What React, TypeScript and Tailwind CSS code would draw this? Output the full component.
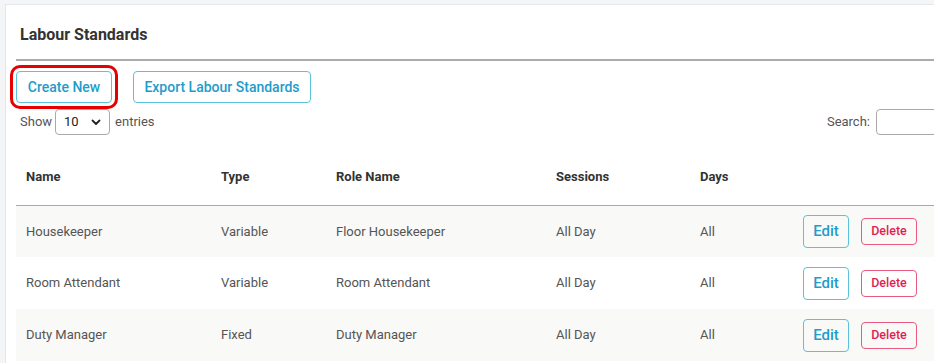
import React from "react";

type Row = {
  name: string;
  type: string;
  role: string;
  sessions: string;
  days: string;
};

const rows: Row[] = [
  { name: "Housekeeper", type: "Variable", role: "Floor Housekeeper", sessions: "All Day", days: "All" },
  { name: "Room Attendant", type: "Variable", role: "Room Attendant", sessions: "All Day", days: "All" },
  { name: "Duty Manager", type: "Fixed", role: "Duty Manager", sessions: "All Day", days: "All" }
];

export default function App() {
  return (
    <div
      className="w-[934px] h-[363px] overflow-hidden bg-[#f3f5f7] pt-[4px] pl-[5px]"
      style={{ fontFamily: "Roboto, 'Liberation Sans', sans-serif" }}>
      <div className="w-[1000px] h-[400px] bg-white border-l border-t border-[#e4e8ec] px-[10px]">
        <h1 className="pt-[18px] pl-[4px] text-[16px] leading-6 font-bold text-[#333]">
          Labour Standards
        </h1>
        <div className="mt-[12px] h-[2px] bg-[#ababab]" />

        <div className="flex items-center gap-[21px] mt-[10px]">
          <button className="h-[32px] w-[96px] rounded-[4px] border border-[#5bc2de] text-[14px] font-medium text-[#1f9ccb] outline-[3px] outline-solid outline-[#e60000] outline-offset-[3px]">
            Create New
          </button>
          <button className="h-[32px] w-[178px] rounded-[4px] border border-[#5bc2de] text-[14px] font-medium text-[#1f9ccb]">
            Export Labour Standards
          </button>
        </div>

        <div className="flex items-center mt-[6px] pl-[4px] w-[960px] text-[13px] text-[#555]">
          <span>Show</span>
          <div className="ml-[3px] mr-[5px] h-[26px] w-[55px] rounded-[4px] border border-[#aaa] flex items-center justify-between px-[8px] text-[13px] text-[#222]">
            <span>10</span>
            <svg width="10" height="7" viewBox="0 0 10 7" fill="none">
              <path d="M1.5 1.5 L5 5 L8.5 1.5" stroke="#222" strokeWidth="1.8" strokeLinecap="round" strokeLinejoin="round" />
            </svg>
          </div>
          <span>entries</span>
          <span className="ml-auto mr-[6px]">Search:</span>
          <div className="h-[26px] w-[100px] rounded-[4px] border border-[#aaa]" />
        </div>

        <table className="mt-[13px] w-[980px] table-fixed border-collapse text-[13px]">
          <thead>
            <tr className="border-b border-[#a9a9a9] text-[#333] font-bold">
              <th className="h-[57px] w-[205px] pl-[10px] text-left">Name</th>
              <th className="w-[115px] text-left">Type</th>
              <th className="w-[220px] text-left">Role Name</th>
              <th className="w-[144px] text-left">Sessions</th>
              <th className="w-[103px] text-left">Days</th>
              <th className="w-[193px]" />
            </tr>
          </thead>
          <tbody className="text-[#555]">
            {rows.map((row, i) => (
              <tr key={row.name} className={i % 2 === 0 ? "bg-[#f9f9f8]" : "bg-white"}>
                <td className="h-[52px] pl-[10px]">{row.name}</td>
                <td>{row.type}</td>
                <td>{row.role}</td>
                <td>{row.sessions}</td>
                <td>{row.days}</td>
                <td>
                  <div className="flex items-center gap-[12px]">
                    <button className="h-[33px] w-[46px] rounded-[4px] border border-[#5bc2de] text-[15px] font-medium text-[#1f9ccb]">
                      Edit
                    </button>
                    <button className="h-[27px] w-[56px] rounded-[4px] border border-[#ea5a80] text-[12.5px] font-medium text-[#de1e55]">
                      Delete
                    </button>
                  </div>
                </td>
              </tr>
            ))}
          </tbody>
        </table>
      </div>
    </div>
  );
}
